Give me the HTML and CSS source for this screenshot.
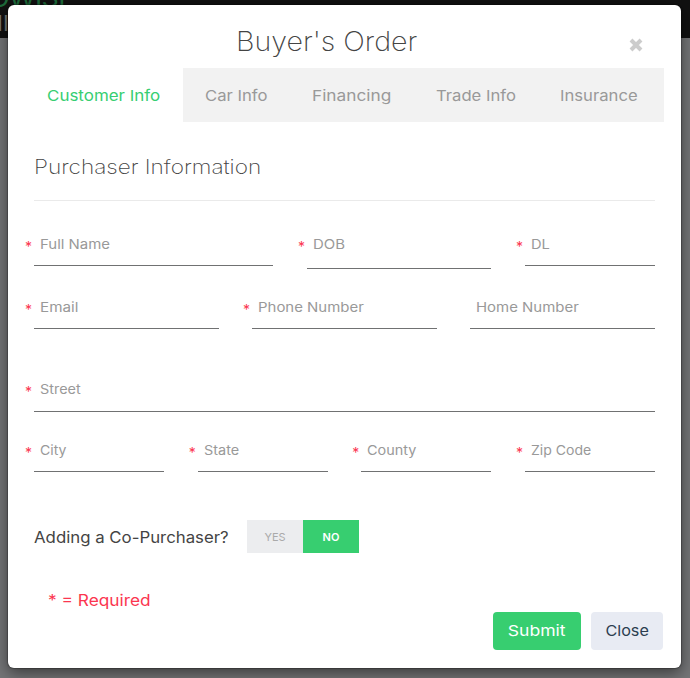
FILE: index.html
```html
<!DOCTYPE html>
<html lang="en">
<head>
<meta charset="utf-8">
<title>Buyer's Order</title>
<link rel="stylesheet" href="styles.css">
</head>
<body>
<div class="topbar"><span class="brand">OWISE</span><span class="brand-sub">II</span></div>
<main class="modal">
  <header class="modal-header">
    <h1><span class="wide w6">Buyer's Order</span></h1>
    <svg class="close-icon" viewBox="0 0 14 14" width="14" height="14"><path d="M2 2L12 12M12 2L2 12" stroke="#ccc" stroke-width="4" fill="none"/></svg>
  </header>
  <nav class="tabs">
    <span class="tab active"><span class="wide w13">Customer Info</span></span>
    <span class="tab car"><span class="wide w11">Car Info</span></span>
    <span class="tab financing"><span class="wide w15">Financing</span></span>
    <span class="tab trade"><span class="wide w11">Trade Info</span></span>
    <span class="tab insurance"><span class="wide w11">Insurance</span></span>
  </nav>
  <form class="content">
    <h2><span class="wide w13">Purchaser Information</span></h2>
    <div class="row identity">
      <label class="field required"><span class="wide w15">Full Name</span></label>
      <label class="field required dob"><span class="wide w15">DOB</span></label>
      <label class="field required"><span class="wide w13">DL</span></label>
    </div>
    <div class="row contact">
      <label class="field required"><span class="wide w17">Email</span></label>
      <label class="field required"><span class="wide w15">Phone Number</span></label>
      <label class="field"><span class="wide w15">Home Number</span></label>
    </div>
    <div class="row street">
      <label class="field required"><span class="wide w11">Street</span></label>
    </div>
    <div class="row address">
      <label class="field required"><span class="wide w8">City</span></label>
      <label class="field required"><span class="wide w11">State</span></label>
      <label class="field required"><span class="wide w11">County</span></label>
      <label class="field required"><span class="wide w8">Zip Code</span></label>
    </div>
    <div class="co-purchaser">
      <span class="question"><span class="wide w5">Adding a Co-Purchaser?</span></span>
      <div class="toggle"><span class="yes">YES</span><span class="no">NO</span></div>
    </div>
    <p class="note"><span class="wide w8">* = Required</span></p>
  </form>
  <footer class="modal-footer">
    <button class="btn submit"><span class="wide w17">Submit</span></button>
    <button class="btn dismiss"><span class="wide w8">Close</span></button>
  </footer>
</main>
</body>
</html>
```
FILE: styles.css
```css
* { box-sizing: border-box; }
body {
  margin: 0;
  height: 678px;
  overflow: hidden;
  padding: 5px 9px 10px 8px;
  position: relative;
  background: linear-gradient(#111 38px, #747577 38px);
  font-family: Inter, "Liberation Sans", sans-serif;
  color: #444;
}
.topbar { position: absolute; left: 0; top: 0; width: 100%; height: 38px; overflow: hidden; background: #111; }
.brand { position: absolute; left: -11px; top: -12px; font-size: 24px; line-height: 22px; letter-spacing: -.5px; color: #1d6a3a; transform: scaleX(1.12); transform-origin: left; }
.brand-sub { position: absolute; left: -3px; top: 12px; font-size: 22px; line-height: 22px; color: #777; }
.modal {
  position: relative;
  height: 663px;
  background: #fff;
  border-radius: 6px;
  box-shadow: 0 5px 15px rgba(0, 0, 0, .5), 0 0 1px 1px rgba(0, 0, 0, .25);
}
.wide { display: inline-block; transform-origin: left center; }
.w5 { transform: scaleX(1.05); }
.w6 { transform: scaleX(1.06); }
.w8 { transform: scaleX(1.08); }
.w11 { transform: scaleX(1.11); }
.w13 { transform: scaleX(1.13); }
.w15 { transform: scaleX(1.15); }
.w17 { transform: scaleX(1.17); }
.modal-header {
  display: grid;
  grid-template-columns: 228px 1fr 52px;
  height: 63px;
}
h1 { grid-column: 2; margin: 20px 0 0; font-size: 27px; line-height: 34px; font-weight: 250; white-space: nowrap; }
.close-icon { margin: 33px 0 0; }
.tabs { display: flex; width: 656px; height: 54px; background: #f2f2f2; font-size: 15px; line-height: 55px; color: #999; white-space: nowrap; }
.active { width: 175px; padding-left: 39px; background: #fff; color: #37ce72; }
.car { width: 107px; padding-left: 22px; }
.financing { width: 124px; padding-left: 21.5px; }
.trade { width: 124px; padding-left: 21.5px; }
.insurance { width: 126px; padding-left: 22px; }
.content { padding: 31px 26px 0; }
h2 { margin: 0; height: 48px; border-bottom: 1px solid #eaeaea; font-size: 20px; line-height: 28px; font-weight: 250; }
.row { display: grid; align-items: start; }
.field {
  position: relative;
  height: 35px;
  padding-left: 6px;
  border-bottom: 1px solid #707172;
  font-size: 13px;
  line-height: 27px;
  color: #999;
  white-space: nowrap;
}
.required::before { content: "*"; position: absolute; left: -9px; top: 2px; font-size: 14px; color: #fb3650; }
.identity { margin-top: 30px; grid-template-columns: 239px 184px 130px; column-gap: 34px; }
.dob { height: 38px; }
.contact { margin-top: 25px; grid-template-columns: repeat(3, 185px); justify-content: space-between; }
.street { margin-top: 47px; }
.street .field { height: 36px; }
.address { margin-top: 25px; grid-template-columns: repeat(4, 130px); justify-content: space-between; }
.co-purchaser { display: flex; align-items: center; margin-top: 48px; height: 33px; }
.question { width: 213px; font-size: 16px; line-height: 34px; white-space: nowrap; }
.toggle { display: flex; font-size: 11px; line-height: 34px; text-align: center; }
.yes, .no { width: 56px; height: 33px; }
.yes { background: #ecedef; color: #aaa; }
.no { background: #37ce70; color: #fff; font-weight: 600; }
.note { margin: 35px 0 0 14px; font-size: 16px; line-height: 24px; color: #fb3650; }
.modal-footer { display: flex; justify-content: flex-end; gap: 10px; padding-right: 18px; }
.btn { height: 38px; padding: 0 0 2px; border: 0; border-radius: 4px; font: 15px Inter, sans-serif; }
.btn .wide { transform-origin: center; }
.submit { width: 88px; background: #37ce70; color: #fff; }
.dismiss { width: 72px; background: #e8ebf3; color: #2c3e50; }
```
